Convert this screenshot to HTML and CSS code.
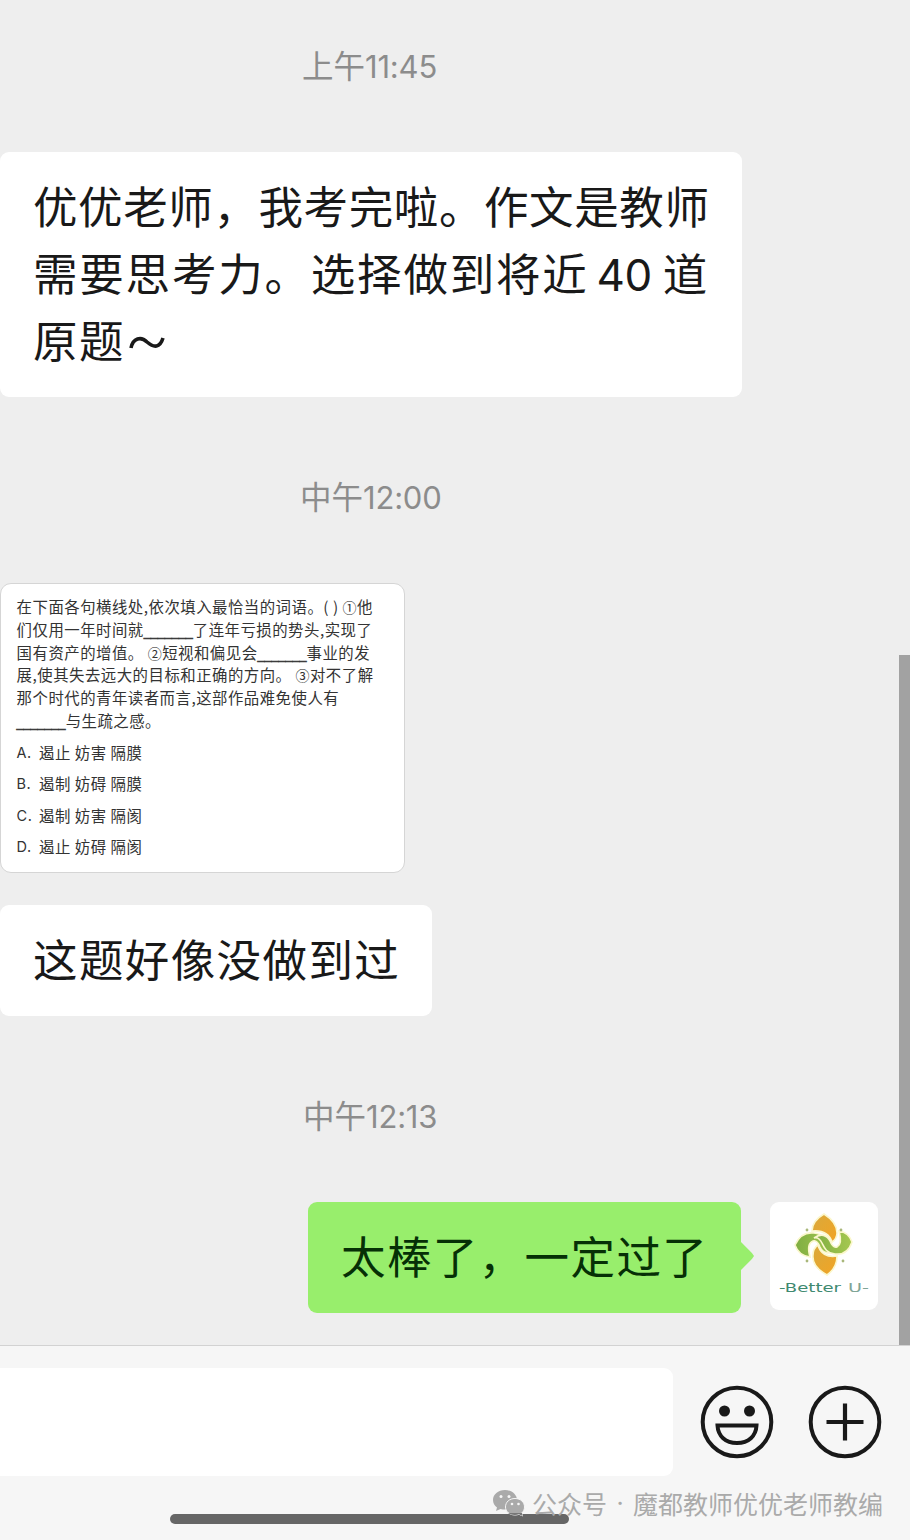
FILE: index.html
```html
<!DOCTYPE html>
<html lang="zh-CN">
<head>
    <meta charset="UTF-8">
    <meta name="viewport" content="width=device-width, initial-scale=1.0">
    <title>聊天记录</title>
    <link rel="stylesheet" href="styles.css">
</head>
<body>

    <main class="chat">
        <div class="time time-first">上午<span class="digits">11:45</span></div>

        <div class="bubble bubble-long">
            <div class="line line-tight">优优老师，我考完啦。作文是教师</div>
            <div class="line line-number"><span>需要思考力。选择做到将近</span><span class="number">40</span><span>道</span></div>
            <div class="line">原题<svg class="tilde" width="36" height="18" viewBox="0 0 36 18"><path d="M2 14C4 4 12 2 18 8C25 14 31 14 34 4"/></svg></div>
        </div>

        <div class="time time-noon">中午<span class="digits">12:00</span></div>

        <div class="question">
            <p>在下面各句横线处,依次填入最恰当的词语。<span class="paren">( )</span> <span class="circled">①</span>他</p>
            <p>们仅用一年时间就<span class="blank">_______</span>了连年亏损的势头,实现了</p>
            <p>国有资产的增值。 <span class="circled">②</span>短视和偏见会<span class="blank">_______</span>事业的发</p>
            <p>展,使其失去远大的目标和正确的方向。 <span class="circled">③</span>对不了解</p>
            <p>那个时代的青年读者而言,这部作品难免使人有</p>
            <p><span class="blank">_______</span>与生疏之感。</p>
            <ul>
                <li><span class="letter">A.</span>遏止 妨害 隔膜</li>
                <li><span class="letter">B.</span>遏制 妨碍 隔膜</li>
                <li><span class="letter">C.</span>遏制 妨害 隔阂</li>
                <li><span class="letter">D.</span>遏止 妨碍 隔阂</li>
            </ul>
        </div>

        <div class="bubble bubble-short">
            <div class="line">这题好像没做到过</div>
        </div>

        <div class="time time-last">中午<span class="digits">12:13</span></div>

        <div class="mine">
            <div class="bubble bubble-green">
                <div class="line">太棒了，一定过了</div>
            </div>
            <div class="avatar">
                <svg width="108" height="108" viewBox="0 0 108 108">
                    <defs>
                        <linearGradient id="orange" x1="0" y1="0" x2="1" y2="1">
                            <stop offset="0" stop-color="#d9a93c"/>
                            <stop offset="1" stop-color="#f2a424"/>
                        </linearGradient>
                        <linearGradient id="green" x1="0" y1="0" x2="1" y2="0">
                            <stop offset="0" stop-color="#7fae42"/>
                            <stop offset="1" stop-color="#a6c850"/>
                        </linearGradient>
                    </defs>
                    <g stroke="#fbf7cc" stroke-width="1.6">
                        <path fill="url(#orange)" d="M54 12C62 17 67 23 67 31C67 35 65 38 62 40C59 31 52 28 42 29C42 21 47 16 54 12Z"/>
                        <path fill="url(#orange)" d="M57 73C48 68 42 62 43 53C43 48 45 45 48 43C50 51 57 56 67 54C67 62 64 68 57 73Z"/>
                        <path fill="url(#green)" d="M25 43C29 34 36 30 44 31C54 32 56 39 58 44C59 47 62 49 65 48C59 53 53 51 50 45C48 40 46 38 43 39C38 41 38 48 40 55C32 54 27 49 25 43Z"/>
                        <path fill="url(#green)" d="M82 40C79 49 73 53 65 52C56 51 54 45 52 41C50 37 47 35 44 36C51 31 57 33 60 39C62 44 64 46 67 45C71 43 71 36 69 29C76 30 80 34 82 40Z"/>
                    </g>
                    <g fill="#a9b77a">
                        <circle cx="37" cy="28" r="1.4"/>
                        <circle cx="71" cy="28" r="1.4"/>
                        <circle cx="37" cy="59" r="1.4"/>
                        <circle cx="73" cy="59" r="1.4"/>
                    </g>
                    <text class="brand" x="9" y="90" textLength="62" lengthAdjust="spacingAndGlyphs">-Better</text>
                    <text class="brand brand-light" x="78" y="90" textLength="21" lengthAdjust="spacingAndGlyphs">U-</text>
                </svg>
            </div>
        </div>
        <div class="scrollbar"></div>
    </main>

    <footer class="toolbar">
        <div class="input-box"></div>
        <svg class="icon" width="74" height="74" viewBox="0 0 74 74">
            <circle cx="37" cy="37" r="34.3" fill="none" stroke="#191919" stroke-width="4"/>
            <circle cx="24.5" cy="26" r="5.5" fill="#191919"/>
            <circle cx="49.5" cy="26" r="5.5" fill="#191919"/>
            <path d="M17.5 40.5H56.5C56 51 48.5 58 37 58C25.5 58 18 51 17.5 40.5Z" fill="none" stroke="#191919" stroke-width="4"/>
        </svg>
        <svg class="icon" width="74" height="74" viewBox="0 0 74 74">
            <circle cx="37" cy="37" r="34.3" fill="none" stroke="#191919" stroke-width="4"/>
            <path d="M37 18.5V55.5M18.5 37H55.5" stroke="#191919" stroke-width="4.2"/>
        </svg>
        <div class="home-bar"></div>
        <div class="watermark">
            <svg width="34" height="28" viewBox="0 0 34 28">
                <path fill="#aaa" d="M13 1C6 1 1 5.5 1 11C1 14 2.5 16.8 5 18.5L4 22L8.5 20C10 20.4 11.3 20.5 13 20.5C20 20.5 25 16 25 11C25 5.5 19.5 1 13 1Z"/>
                <path fill="#aaa" stroke="#f6f6f6" d="M23 9.500C17.500 9.500 13.500 13 13.500 18C13.500 22.500 17.500 26 23 26C24.500 26 25.500 25.800 27 25.300L30.500 27L29.700 24C31.500 22.500 32.500 20.500 32.500 18C32.500 13 28.500 9.500 23 9.500Z"/>
                <g fill="#f6f6f6">
                    <circle cx="9" cy="7.5" r="1.5"/>
                    <circle cx="17" cy="7.5" r="1.5"/>
                    <circle cx="20" cy="15" r="1.3"/>
                    <circle cx="26.5" cy="15" r="1.3"/>
                </g>
                <path fill="#777" d="M16 24H30L30.500 27L27 25.300C23 26.500 19 26 16 24Z"/>
            </svg>
            <span class="account">公众号</span><span class="dot">·</span><span>魔都教师优优老师教编</span>
        </div>
    </footer>

</body>
</html>
```
FILE: styles.css
```css
* {
    box-sizing: border-box;
}

body {
    margin: 0;
    width: 910px;
    height: 1540px;
    overflow: hidden;
    background-color: #eeeeee;
    font-family: "Noto Sans CJK SC", sans-serif;
    color: #191919;
}

p, ul {
    margin: 0;
    padding: 0;
    list-style: none;
}

.chat {
    position: relative;
    display: flex;
    flex-direction: column;
    align-items: flex-start;
    height: 1345px;
}

.time {
    height: 40px;
    line-height: 40px;
    font-size: 31.5px;
    color: #8c8c8c;
    white-space: nowrap;
}

.digits {
    font-family: Inter, sans-serif;
    font-size: 31px;
    letter-spacing: -0.2px;
}

.time-first {
    margin: 44px 0 68px 302px;
}

.time-noon {
    margin: 78px 0 68px 300px;
}

.time-last {
    margin: 78px 0 68px 303px;
}

.bubble {
    padding: 19px 33px;
    background-color: #fff;
    border-radius: 9px;
}

.bubble-long {
    width: 742px;
    height: 245px;
}

.bubble-short {
    width: 432px;
    height: 111px;
    margin-top: 32px;
}

.line {
    height: 67px;
    line-height: 67px;
    font-size: 44.5px;
    letter-spacing: 1.4px;
    white-space: nowrap;
}

.line-tight {
    letter-spacing: 0.6px;
}

.line-number {
    display: flex;
    letter-spacing: 1.8px;
}

.number {
    margin: 0 11px 0 8px;
    padding-top: 4px;
    font-family: Inter, sans-serif;
    font-size: 44px;
    letter-spacing: -0.5px;
}

.tilde {
    margin: 0 0 6px 4px;
    fill: none;
    stroke: #191919;
    stroke-width: 3.6;
}

.question {
    width: 405px;
    height: 290px;
    padding: 11px 0 0 15.6px;
    background-color: #fff;
    border: 1px solid #d5d5d5;
    border-radius: 11px;
    font-size: 15.4px;
    letter-spacing: 0.5px;
    color: #333;
    white-space: nowrap;
}

.question p {
    height: 22.8px;
    line-height: 22.8px;
}

.question li {
    display: flex;
    height: 31.5px;
    line-height: 31.5px;
    letter-spacing: 0.5px;
}

.question ul {
    margin-top: 5.2px;
}

.blank {
    font-family: "Liberation Sans", sans-serif;
    font-size: 12.6px;
    letter-spacing: 0;
    -webkit-text-stroke: 0.5px #333;
}

.circled {
    font-size: 14px;
}

.letter {
    width: 22.5px;
    font-family: Inter, sans-serif;
    font-size: 14.5px;
}

.mine {
    display: flex;
    gap: 29px;
    margin-left: 308px;
}

.bubble-green {
    position: relative;
    width: 433px;
    height: 111px;
    background-color: #98ee6c;
    color: #063006;
}

/* little arrow on the right of the sent message */
.bubble-green::after {
    content: "";
    position: absolute;
    top: 39px;
    left: 432px;
    width: 14px;
    height: 30px;
    background-color: #98ee6c;
    clip-path: polygon(0 0, 85% 40%, 100% 50%, 85% 60%, 0 100%);
}

.avatar {
    width: 108px;
    height: 108px;
    background-color: #fff;
    border-radius: 9px;
    overflow: hidden;
}

.brand {
    font-family: "DejaVu Sans", sans-serif;
    font-size: 12px;
    fill: #3f8a70;
}

.brand-light {
    fill: #80a596;
}

.scrollbar {
    position: absolute;
    top: 655px;
    right: 0;
    width: 11px;
    height: 690px;
    background-color: #a2a2a2;
}

.toolbar {
    position: relative;
    display: flex;
    height: 195px;
    padding-top: 22px;
    border-top: 1px solid #d2d2d2;
    background-color: #f6f6f6;
}

.input-box {
    width: 673px;
    height: 108px;
    background-color: #fff;
    border-radius: 0 9px 9px 0;
}

.icon {
    margin: 17px 7px 0 27.4px;
}

.icon + .icon {
    margin-left: 26.6px;
}

.home-bar {
    position: absolute;
    left: 170px;
    top: 168px;
    width: 399px;
    height: 10px;
    border-radius: 5px;
    background-color: #666;
}

.watermark {
    position: absolute;
    left: 492px;
    top: 137px;
    display: flex;
    align-items: center;
    height: 40px;
    font-size: 25px;
    line-height: 40px;
    color: #aaa;
    white-space: nowrap;
}

.account {
    margin-left: 6px;
}

.dot {
    width: 26px;
    font-family: Inter, sans-serif;
    text-align: center;
}
```
